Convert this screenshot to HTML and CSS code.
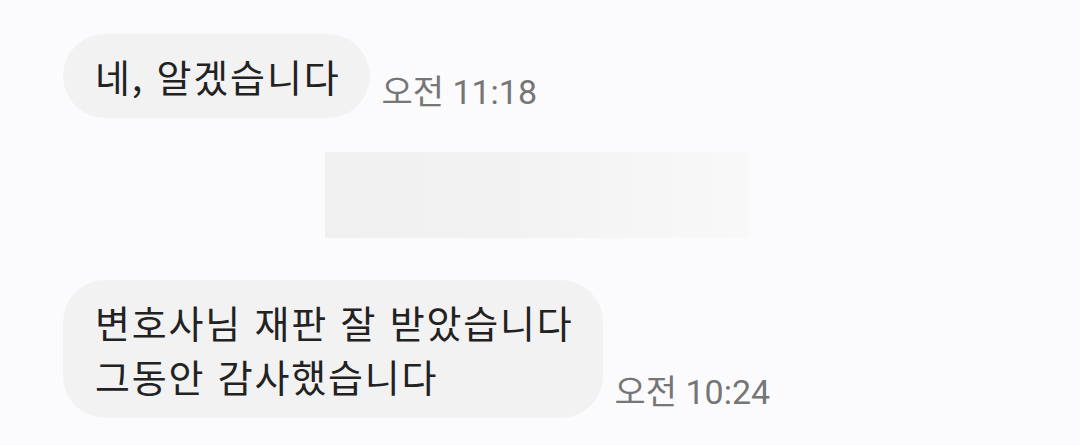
FILE: index.html
```html
<!DOCTYPE html>
<html lang="ko">
<head>
  <meta charset="UTF-8" />
  <meta name="viewport" content="width=device-width, initial-scale=1.0"/>
  <title>Chat</title>
  <link rel="stylesheet" href="styles.css">
</head>
<body>

  <div class="chat">
    <div class="row">
      <div class="bubble">네, 알겠습니다</div>
      <span class="time">오전 11:18</span>
    </div>

    <div class="blurred"></div>

    <div class="row">
      <div class="bubble">변호사님 재판 잘 받았습니다<br>그동안 감사했습니다</div>
      <span class="time">오전 10:24</span>
    </div>
  </div>

</body>
</html>
```

FILE: styles.css
```css
body {
  margin: 0;
  background: #fbfbfd;
  font-family: "Noto Sans CJK KR", "Noto Sans", sans-serif;
  color: #222;
}

.chat {
  padding: 34px 63px 0;
  display: flex;
  flex-direction: column;
}

.row {
  display: flex;
  align-items: flex-end;
  gap: 11px;
}

.bubble {
  background: #f2f2f3;
  border-radius: 42px;
  padding: 15px 30px 15px 32px;
  font-size: 38px;
  letter-spacing: 1.8px;
  line-height: 54px;
}

.time {
  font-family: Roboto, "Noto Sans CJK KR", sans-serif;
  font-size: 34px;
  color: #767676;
  line-height: 1;
  padding-bottom: 9px;
}

.blurred {
  width: 424px;
  height: 86px;
  margin: 34px 0 42px 262px;
  background: linear-gradient(90deg, #f0f0f1 0%, #f2f2f3 45%, #f9f9fa 100%);
}
```
